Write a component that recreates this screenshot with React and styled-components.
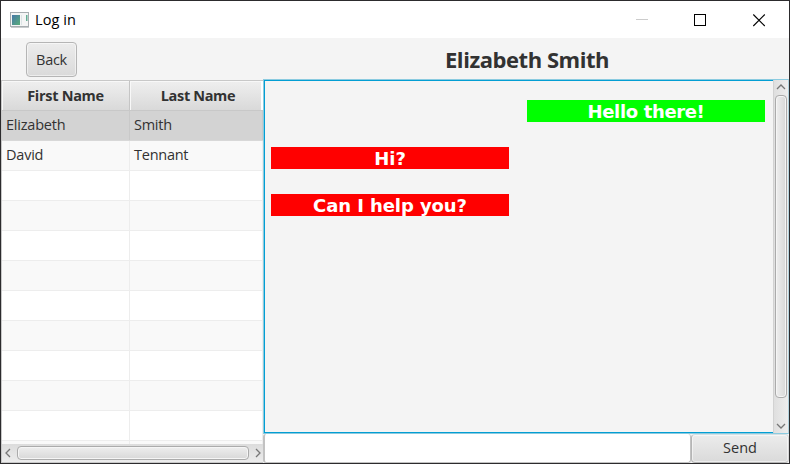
import React from "react";
import styled, { createGlobalStyle } from "styled-components";

const Global = createGlobalStyle`
  * { box-sizing: border-box; }
  body { margin: 0; overflow: hidden; background: #2c2b2d; }
`;

const Window = styled.div`
  width: 790px;
  height: 464px;
  border: 1px solid #2c2b2d;
  background: #f4f4f4;
  color: #323232;
  font: 14.5px/20px "Open Sans", "Noto Sans", sans-serif;
  display: flex;
  flex-direction: column;
`;

const TitleBar = styled.header`
  height: 37px;
  flex: none;
  background: #fff;
  color: #000;
  display: flex;
  align-items: center;
  padding-left: 9px;
`;

const Label = styled.span`
  display: block;
  white-space: nowrap;
  letter-spacing: ${(p) => p.$track || 0}px;
`;

const Title = styled(Label)`
  margin-left: 6px;
  flex: 1;
`;

const WindowControls = styled.div`
  display: flex;
  width: 176px;
  svg { width: 58.6px; height: 36px; flex: none; }
`;

const Toolbar = styled.div`
  height: 42px;
  flex: none;
  display: flex;
  padding: 4px 0 0 25px;
`;

const Button = styled.button`
  font: inherit;
  color: inherit;
  padding: 0;
  display: flex;
  align-items: center;
  justify-content: center;
  border: 1px solid #b5b5b5;
  border-radius: 4px;
  background: linear-gradient(#ececec, #dadada);
  box-shadow: inset 0 0 0 1px rgba(255, 255, 255, 0.5);
`;

const BackButton = styled(Button)`
  width: 51px;
  height: 35px;
`;

const Heading = styled.h1`
  margin: 2px 0 0 368px;
  font-size: 22px;
  line-height: 30px;
  font-weight: 700;
`;

const Content = styled.main`
  flex: 1;
  min-height: 0;
  display: flex;
`;

const TablePane = styled.section`
  width: 262px;
  flex: none;
  border: 1px solid #c8c8c8;
  border-right-width: 0;
  border-bottom: 0;
  display: flex;
  flex-direction: column;
`;

const HeaderRow = styled.div`
  display: grid;
  grid-template-columns: 128px 133px;
  height: 30px;
  flex: none;
  border-bottom: 1px solid #c8c8c8;
`;

const HeaderCell = styled.div`
  display: flex;
  align-items: center;
  justify-content: center;
  padding-left: ${(p) => (p.$last ? "5px" : 0)};
  font-weight: 700;
  background: linear-gradient(#efefef, #d9d9d9);
  box-shadow: inset 1px 1px #f8f8f8;
  border-right: ${(p) => (p.$last ? "2px solid #fff" : "1px solid #c5c5c5")};
`;

const Rows = styled.div`
  flex: 1;
  min-height: 0;
  overflow: hidden;
`;

const Row = styled.div`
  display: grid;
  grid-template-columns: 128px 133px;
  height: 30px;
  background: ${(p) => (p.$selected ? "#d3d3d3" : p.$odd ? "#f9f9f9" : "#fff")};
  border-bottom: 1px solid ${(p) => (p.$selected ? "#d8d8d8" : "#ededed")};
`;

const Cell = styled.div`
  padding: 4px 0 0 4px;
  border-right: 1px solid ${(p) => (p.$selected ? "#c9c9c9" : "#ededed")};
`;

const HScroll = styled.div`
  height: 19px;
  flex: none;
  display: flex;
  align-items: center;
  justify-content: space-between;
  padding: 0 2px 0 3px;
  background: linear-gradient(#dcdcdc, #ececec);
  border-bottom: 1px solid #c8c8c8;
`;

const Thumb = styled.div`
  border: 1px solid #ababab;
  border-radius: 4px;
  box-shadow: inset 0 0 0 1px #f5f5f5;
  width: ${(p) => (p.$vertical ? "12px" : "232px")};
  height: ${(p) => (p.$vertical ? "303px" : "14px")};
  margin: ${(p) => (p.$vertical ? "0 0 21px" : "0 1px 0 0")};
  background: linear-gradient(${(p) => (p.$vertical ? "to right" : "to bottom")}, #eeeeee, #d8d8d8);
`;

const ChatPane = styled.section`
  flex: 1;
  min-width: 0;
  display: flex;
  flex-direction: column;
`;

const ChatFrame = styled.div`
  height: 355px;
  margin-top: -1px;
  flex: none;
  display: flex;
  border: 1px solid #8bcbe0;
  border-right-color: #b4d3de;
`;

const Messages = styled.div`
  flex: 1;
  padding: 20px 8px 0 7px;
  box-shadow: inset 1px 1px #039ed3, inset 0 -1px #039ed3;
  display: flex;
  flex-direction: column;
  gap: 25px;
`;

const Bubble = styled.div`
  width: 238px;
  height: 22px;
  align-self: ${(p) => (p.$mine ? "flex-end" : "flex-start")};
  background: ${(p) => (p.$mine ? "#00ff00" : "#ff0000")};
  color: #fff;
  font: bold 18px/24px "DejaVu Sans", sans-serif;
  display: flex;
  justify-content: center;
`;

const VScroll = styled.div`
  width: 15px;
  display: flex;
  flex-direction: column;
  align-items: center;
  justify-content: space-between;
  padding: 4px 0;
  border-left: 1px solid #d2d2d2;
  background: linear-gradient(to right, #dfdfdf, #ededed);
`;

const Arrow = styled.svg`
  display: block;
  fill: none;
  stroke: #777;
  stroke-width: 1.3;
`;

const Composer = styled.div`
  flex: 1;
  display: flex;
`;

const MessageInput = styled.input`
  flex: 1;
  min-width: 0;
  padding: 0 8px;
  font: inherit;
  border: 1px solid #c2c2c2;
  border-left-width: 2px;
  border-top: 0;
  border-radius: 3px;
  background: #fff;
  outline: 0;
`;

const SendButton = styled(Button)`
  width: 98px;
  padding-bottom: 1px;
  border-top-color: #d5dfe3;
  border-right-color: #d5d5d5;
`;

const people = [
  { first: "Elizabeth", last: "Smith", selected: true },
  { first: "David", last: "Tennant" },
  ...Array.from({ length: 10 }, () => ({ first: "", last: "" })),
];

const messages = [
  { text: "Hello there!", mine: true, track: -0.35 },
  { text: "Hi?" },
  { text: "Can I help you?", track: -0.08 },
];

function AppIcon() {
  return (
    <svg width="19" height="16" viewBox="0 0 19 16">
      <defs>
        <linearGradient id="screen" x1="0" y1="0" x2="1" y2="1">
          <stop stopColor="#4778a8" />
          <stop offset="1" stopColor="#58ad79" />
        </linearGradient>
      </defs>
      <rect x=".5" y=".5" width="18" height="14" fill="#f4f5f5" stroke="#a7adb0" />
      <path d="M1 15.5h18" stroke="#c8cbcd" />
      <rect x="2" y="3" width="8" height="10" fill="url(#screen)" />
      <path d="M11.5 3v10" stroke="#dce3e5" />
      <rect x="16" y="3" width="1.5" height="6" fill="#63ad94" />
    </svg>
  );
}

export default function App() {
  return (
    <>
      <Global />
      <Window>
        <TitleBar>
          <AppIcon />
          <Title $track={0.1}>Log in</Title>
          <WindowControls>
            <svg viewBox="0 0 58.6 36"><path d="M23 17.5h12" stroke="#ccc" /></svg>
            <svg viewBox="0 0 58.6 36" shapeRendering="crispEdges"><rect x="22.9" y="12.5" width="11" height="11" fill="none" stroke="#000" /></svg>
            <svg viewBox="0 0 58.6 36"><path d="M23.3 12.5l11.5 11.5M34.8 12.5L23.3 24" stroke="#000" strokeWidth="1.1" /></svg>
          </WindowControls>
        </TitleBar>
        <Toolbar>
          <BackButton><Label $track={-0.3}>Back</Label></BackButton>
          <Heading><Label $track={-0.45}>Elizabeth Smith</Label></Heading>
        </Toolbar>
        <Content>
          <TablePane>
            <HeaderRow>
              <HeaderCell><Label $track={-0.3}>First Name</Label></HeaderCell>
              <HeaderCell $last><Label $track={-0.35}>Last Name</Label></HeaderCell>
            </HeaderRow>
            <Rows>
              {people.map((p, i) => (
                <Row key={i} $selected={p.selected} $odd={i % 2 === 1}>
                  <Cell $selected={p.selected}><Label $track={-0.22}>{p.first}</Label></Cell>
                  <Cell $selected={p.selected}><Label $track={-0.25}>{p.last}</Label></Cell>
                </Row>
              ))}
            </Rows>
            <HScroll>
              <Arrow width="6" height="10"><path d="M5 1L1 5l4 4" /></Arrow>
              <Thumb />
              <Arrow width="6" height="10"><path d="M1 1l4 4-4 4" /></Arrow>
            </HScroll>
          </TablePane>
          <ChatPane>
            <ChatFrame>
              <Messages>
                {messages.map((m) => (
                  <Bubble key={m.text} $mine={m.mine}><Label $track={m.track}>{m.text}</Label></Bubble>
                ))}
              </Messages>
              <VScroll>
                <Arrow width="10" height="6"><path d="M1 5l4-4 4 4" /></Arrow>
                <Thumb $vertical />
                <Arrow width="10" height="6"><path d="M1 1l4 4 4-4" /></Arrow>
              </VScroll>
            </ChatFrame>
            <Composer>
              <MessageInput aria-label="Message" />
              <SendButton><Label>Send</Label></SendButton>
            </Composer>
          </ChatPane>
        </Content>
      </Window>
    </>
  );
}
